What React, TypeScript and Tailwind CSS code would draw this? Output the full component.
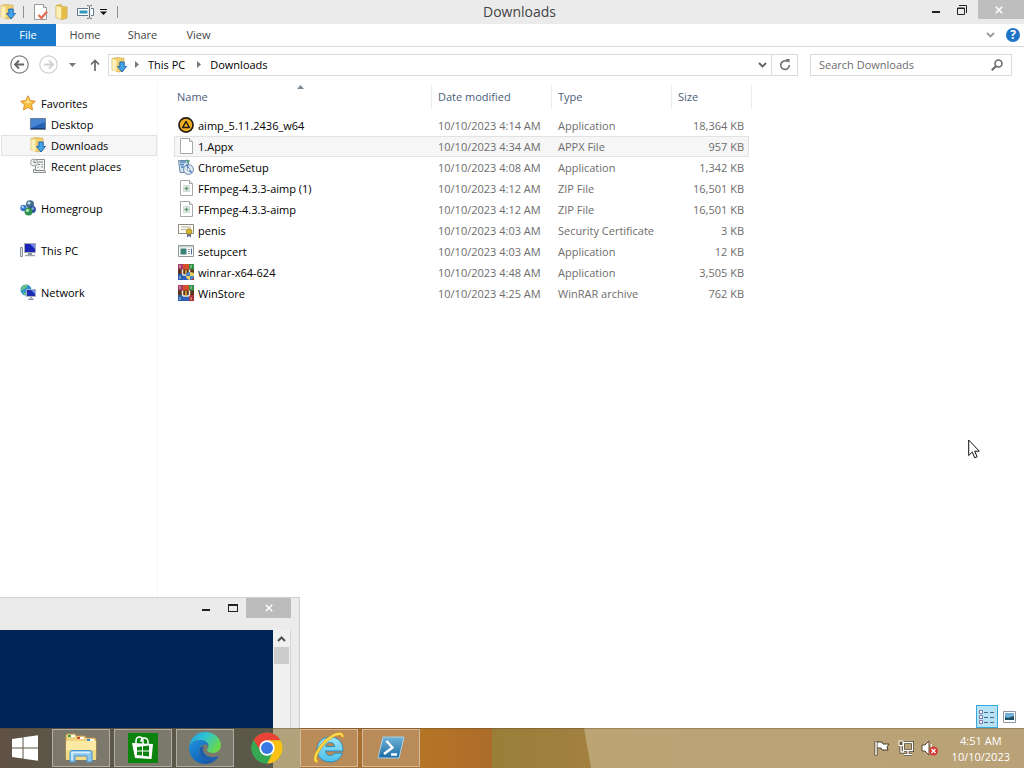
import { useState, type ReactNode } from 'react';

const FONT = "font-['Open_Sans','Noto_Sans',sans-serif]";

/* ---------- small icons ---------- */

function FolderDownIcon() {
  return (
    <svg width="16" height="16" viewBox="0 0 16 16" aria-hidden="true">
      <path d="M1 1.500L6 .5l7 .8v12.200l-5 1.500-7-2z" fill="#efcf6e" stroke="#cfae52" strokeWidth=".7" />
      <path d="M1.300 2l4.200 1v11.500l-4.200-1.200z" fill="#fdf0b8" />
      <path d="M8.800 5h4.400v4.500h2.300L11 15 6.500 9.500h2.300z" fill="#45a4ea" stroke="#1a62ae" strokeWidth=".9" />
    </svg>
  );
}

function PropertiesIcon() {
  return (
    <svg width="16" height="16" viewBox="0 0 16 16" aria-hidden="true">
      <path d="M1.500.5h9l3 3v12h-12z" fill="#fff" stroke="#9a9a9a" />
      <path d="M10.500.5v3h3" fill="#eee" stroke="#9a9a9a" />
      <path d="M5.500 11l3 3L14 7.500" fill="none" stroke="#e46a55" strokeWidth="2.400" />
    </svg>
  );
}

function FolderIcon() {
  return (
    <svg width="16" height="16" viewBox="0 0 16 16" aria-hidden="true">
      <path d="M2 1.500L7 .5l1 2 5 .5v11l-5 1.500-6-2z" fill="#ecc85c" stroke="#c9a33f" strokeWidth=".8" />
      <path d="M2.300 2l4.700 1.500V15l-4.700-1.500z" fill="#fdf0b5" />
      <path d="M8 5l4.500-1v9L8 14.500z" fill="#e5bb48" />
    </svg>
  );
}

function RenameIcon() {
  return (
    <svg width="18" height="14" viewBox="0 0 18 14" aria-hidden="true">
      <path d="M11 3.500H.5v7H11M14 3.500h2.500v7H14" fill="#fff" stroke="#62798a" />
      <path d="M2.500 5.500h8v3h-8z" fill="#3196bd" />
      <path d="M10 .5c1.500 0 2.500.3 2.500 1.500v10c0 1.200-1 1.500-2.500 1.500M15 .5c-1.500 0-2.500.3-2.500 1.500v10c0 1.200 1 1.500 2.500 1.500" fill="none" stroke="#66737e" />
    </svg>
  );
}

function StarIcon() {
  return (
    <svg width="16" height="16" viewBox="0 0 16 16" aria-hidden="true">
      <path d="M8 .8l2.200 4.800 5.200.6-3.900 3.500 1.100 5.300L8 12.400 3.400 15l1.100-5.300L.6 6.200l5.200-.6z" fill="#fdbe3d" stroke="#d8872a" strokeWidth=".9" />
      <path d="M8 3l1.300 3.300 3.200.5L8 8.500 4 7l2.700-.6z" fill="#ffe48a" />
    </svg>
  );
}

function DesktopIcon() {
  return (
    <svg width="16" height="16" viewBox="0 0 16 16" aria-hidden="true">
      <path d="M.5 2.500h15v11H.5z" fill="#2660b5" stroke="#6e8199" />
      <path d="M1 3h14v3L1 12z" fill="#4585d2" />
      <path d="M1 12h14v1H1z" fill="#1c3d73" />
    </svg>
  );
}

function RecentIcon() {
  return (
    <svg width="16" height="16" viewBox="0 0 16 16" aria-hidden="true">
      <path d="M5.500 1.500h9v10l1 3h-12v-3h2z" fill="#f5f5f5" stroke="#8a908d" />
      <path d="M8 4h5M8 6.500h2M11.500 6.500H13M7.500 9H9M11 9h2M5 12.500h9" stroke="#7c8784" />
      <circle cx="4" cy="4.500" r="3.500" fill="#eef0ef" stroke="#9a9f9d" />
      <path d="M4 2.500v2h2" fill="none" stroke="#6e7573" />
    </svg>
  );
}

function HomegroupIcon() {
  return (
    <svg width="16" height="16" viewBox="0 0 16 16" aria-hidden="true">
      <circle cx="3.500" cy="8" r="3.200" fill="#3d77d0" />
      <circle cx="2.800" cy="7" r="1.200" fill="#a5cdf5" />
      <circle cx="10" cy="4.200" r="4" fill="#41708f" />
      <circle cx="9" cy="3" r="1.600" fill="#c1dceb" />
      <circle cx="12.500" cy="9.500" r="3.400" fill="#2b4fa0" />
      <circle cx="8.500" cy="11.500" r="4" fill="#2f9152" />
      <circle cx="7.500" cy="10.500" r="1.700" fill="#a8e0b0" />
      <circle cx="12.800" cy="8.500" r="1.200" fill="#8eb2e8" />
    </svg>
  );
}

function ComputerIcon() {
  return (
    <svg width="16" height="16" viewBox="0 0 16 16" aria-hidden="true">
      <path d="M.5 5.500h2v9h-2z" fill="#e4e6e8" stroke="#8b9096" />
      <path d="M4.500 1.500h11v9h-11z" fill="#1a25b8" stroke="#a5aab5" />
      <path d="M10 2h5v5z" fill="#7186e8" />
      <path d="M8 11h4v2H8z" fill="#8d939c" />
      <path d="M5 13.500h10" stroke="#9da2a8" strokeWidth="1.500" />
    </svg>
  );
}

function NetworkIcon() {
  return (
    <svg width="16" height="16" viewBox="0 0 16 16" aria-hidden="true">
      <circle cx="6" cy="6" r="5.500" fill="#2f8fd0" />
      <path d="M2 3c2-2 4-2.500 6-2L6 4 3 6 1 7zM3 8l3 1v2.500C4 11 3 10 3 8z" fill="#64c47c" />
      <path d="M6.500 5.500h9v7h-9z" fill="#1c2cb0" stroke="#a9b3c6" />
      <path d="M11 6h4v4z" fill="#6d8ae8" />
      <path d="M10 13h2v1.500H8.500V16h5v-1.500H12" fill="#888f99" />
    </svg>
  );
}

function AimpIcon() {
  return (
    <svg width="16" height="16" viewBox="0 0 16 16" aria-hidden="true">
      <circle cx="8" cy="8" r="7.900" fill="#221b12" />
      <circle cx="8" cy="8" r="6.200" fill="#efae22" />
      <path d="M8 4.500l3.300 6H4.700z" fill="none" stroke="#221b12" strokeWidth="1.500" strokeLinejoin="round" />
    </svg>
  );
}

function BlankFileIcon({ zip = false }: { zip?: boolean }) {
  return (
    <svg width="16" height="16" viewBox="0 0 16 16" aria-hidden="true">
      <path d="M2.500.5h9l3 3v12h-12z" fill="#fff" stroke="#a8a8a8" />
      <path d="M11.500.5v3h3" fill="#eee" stroke="#a8a8a8" />
      {zip && (
        <>
          <path d="M5.500 5.500h6v6h-6z" fill="#eaf1ec" stroke="#b9c6bd" strokeWidth=".6" />
          <path d="M8.500 6.500v4M6.500 8.500h4" stroke="#5f9a72" strokeWidth="1.300" />
        </>
      )}
    </svg>
  );
}

function SetupIcon() {
  return (
    <svg width="16" height="16" viewBox="0 0 16 16" aria-hidden="true">
      <path d="M.5 1.500h10v12H2z" fill="#cfe0f2" stroke="#7089a5" />
      <path d="M2 3h6M2 5.500h4M3 8h3" stroke="#4d84bd" strokeWidth="1.300" />
      <path d="M8 .5l4 1-2 4z" fill="#54a07a" />
      <circle cx="10.500" cy="10.500" r="4.900" fill="#e3edf8" stroke="#6584a8" />
      <path d="M10.500 10.500L9 5.500M10.500 10.500l3 3" stroke="#4c77c5" strokeWidth="1.600" />
      <circle cx="10.500" cy="10.500" r="1.500" fill="#fff" stroke="#68819e" strokeWidth=".7" />
    </svg>
  );
}

function CertificateIcon() {
  return (
    <svg width="16" height="16" viewBox="0 0 16 16" aria-hidden="true">
      <path d="M.5 2.500h15v9H.5z" fill="#fffdf4" stroke="#8c8b7d" />
      <path d="M3 5h10M3 7.500h5" stroke="#b1ada0" />
      <path d="M9 11h4v4.500L11 14l-2 1.500z" fill="#5d6d9f" />
      <circle cx="11" cy="9.500" r="2.800" fill="#d3b62b" stroke="#957b17" strokeWidth=".7" />
    </svg>
  );
}

function AppWindowIcon() {
  return (
    <svg width="16" height="16" viewBox="0 0 16 16" aria-hidden="true">
      <path d="M.5 2.500h15v11H.5z" fill="#fff" stroke="#8f9a98" />
      <path d="M1 3h14v1.500H1z" fill="#c7d2d1" />
      <path d="M2.500 5.500h6v6h-6z" fill="#3d8279" />
      <path d="M10 6.500h2M10 8.500h2M10 10.500h2" stroke="#8b9694" />
      <path d="M13.500 5.500v6" stroke="#5b6da0" />
    </svg>
  );
}

function WinRarIcon({ shield = false }: { shield?: boolean }) {
  return (
    <svg width="16" height="16" viewBox="0 0 16 16" aria-hidden="true">
      <path d="M0 0h5v16H0z" fill="#a23a6a" />
      <path d="M5 0h6v16H5z" fill="#d4502b" />
      <path d="M11 0h5v16h-5z" fill="#2f9145" />
      <path d="M0 10h5v6H0z" fill="#275fb0" />
      <path d="M11 10h5v6h-5z" fill="#a93239" />
      <path d="M5 10h6v6H5z" fill="#2f5fc0" />
      <path d="M0 5.500h16v4.500H0z" fill="#5c3520" />
      <path d="M4.500 5.500v4q0 1.500 1.500 1.500h4q1.500 0 1.500-1.500v-4" fill="none" stroke="#f3ead2" strokeWidth="1.500" />
      <path d="M8 6v5" stroke="#e8b83b" strokeWidth="1.500" />
      <path d="M2 1v3M13 1v3M2 12v3M13 12v3" stroke="#f0e2c2" strokeWidth=".8" />
      {shield && (
        <>
          <path d="M8 9l4-1 4 1v3q0 3-4 4-4-1-4-4z" fill="#4a86cf" />
          <path d="M12 8l4 1v3h-4zM8 12h4v4q-4-1-4-4z" fill="#e9cf5a" />
        </>
      )}
    </svg>
  );
}

function CloseGlyph() {
  return (
    <svg width="8" height="8" viewBox="0 0 8 8" aria-hidden="true">
      <path d="M.7.7l6.600 6.600M7.300.7L.7 7.300" stroke="#fff" strokeWidth="1.500" />
    </svg>
  );
}

function Crumb() {
  return (
    <svg width="4" height="7" viewBox="0 0 4 7" aria-hidden="true">
      <path d="M0 0l4 3.500L0 7z" fill="#777" />
    </svg>
  );
}

/* ---------- taskbar icons ---------- */

function StartLogo() {
  return (
    <svg width="28" height="28" viewBox="0 0 28 28" aria-hidden="true">
      <path d="M1 5l10.500-1.500v10H1zM12.500 3.300L27 1.200v12.300H12.500zM1 14.500h10.500v10L1 23zM12.500 14.500H27v12.300l-14.500-2.100z" fill="#fff" />
    </svg>
  );
}

function ExplorerLogo() {
  return (
    <svg width="34" height="32" viewBox="0 0 34 32" aria-hidden="true">
      <path d="M2 3.500l1-1.500h8l1 2h9l1 2h9l1 2v18H2z" fill="#efd27e" stroke="#c7a04b" strokeWidth=".8" />
      <path d="M4 3h7v2H4zM13 5h7v2h-7zM23 7h7v2h-7z" fill="#fff" />
      <path d="M4 3h3v2H4z" fill="#3fa44c" />
      <path d="M13 5h3v2h-3z" fill="#d84a38" />
      <path d="M23 7h3v2h-3z" fill="#3c8cd8" />
      <path d="M2 9h30v19H2z" fill="#fbe9a4" />
      <path d="M2 18h30v10H2z" fill="#f3da85" />
      <path d="M6 30V20.500q0-2 2-2h18q2 0 2 2V30h-5v-6H11v6z" fill="#8dc8ef" stroke="#4a93cd" />
      <path d="M8 28v-7.500h18" fill="none" stroke="#d9f1ff" strokeWidth="1.500" />
    </svg>
  );
}

function StoreLogo() {
  return (
    <svg width="30" height="30" viewBox="0 0 30 30" aria-hidden="true">
      <path d="M0 0h30v30H0z" fill="#0b830e" />
      <path d="M8 11V8q0-4 3.500-4T15 8v3M13 9q0-4 3-4 4 0 4 4v2" fill="none" stroke="#fff" strokeWidth="1.500" />
      <path d="M4 10l21 1-1.500 15-16.500-1z" fill="#fff" />
      <path d="M9 14l5-.5v4H9zM15 13.300l6-.8v5h-6zM9 18.500h5v4L9 22zM15 18.500h6v5l-6-.8z" fill="#0b830e" />
    </svg>
  );
}

function EdgeLogo() {
  return (
    <svg width="32" height="32" viewBox="0 0 32 32" aria-hidden="true">
      <defs>
        <linearGradient id="edgeTop" x1="0" y1="0" x2="1" y2=".5">
          <stop offset="0" stopColor="#1e9be0" />
          <stop offset=".5" stopColor="#2fc3d3" />
          <stop offset="1" stopColor="#67d84c" />
        </linearGradient>
        <linearGradient id="edgeLow" x1="0" y1="0" x2="1" y2="1">
          <stop offset="0" stopColor="#1d93de" />
          <stop offset="1" stopColor="#0f4da5" />
        </linearGradient>
      </defs>
      <path d="M0 15C1 6 8 0 16 0c9 0 16 6 16 13 0 5-4 8-8 8-4 0-6-1.500-6-3 0-1 1.500-1.500 1.500-4C19.500 11 16 8 11 8 5 8 1 11 0 15z" fill="url(#edgeTop)" />
      <path d="M0 15c1-4 5-7 11-7 5 0 8.500 3 8.500 6-2-2-6-2-8 1-3 5 0 12 7 14 4 1 8-1 10-3-3 4-8 6-12.500 6C7 32 0 25 0 15z" fill="url(#edgeLow)" />
      <path d="M11.500 15c-3 5 0 12 7 14 4 1 8-1 10-3 1-1 1-2-.5-1.500-6 2-13-.5-14-6-.3-2 .3-3.500 1.500-4.500-2 0-3 .7-4 2z" fill="#1a5fae" />
    </svg>
  );
}

function ChromeLogo() {
  return (
    <svg width="32" height="32" viewBox="0 0 32 32" aria-hidden="true">
      <circle cx="16" cy="16" r="15.500" fill="#34a853" />
      <path d="M2.600 8.200A15.500 15.500 0 0129.400 8.200L16 9z" fill="#ea4335" />
      <path d="M29.400 8.200A15.500 15.500 0 0116 31.500l6-11.700L16 8.200z" fill="#fbc116" />
      <path d="M2.600 8.200L10 19.800 16 16V8.200z" fill="#ea4335" />
      <path d="M2.600 8.200L10 20l6 3 6-3.200-6 11.700A15.500 15.500 0 012.600 8.200z" fill="#34a853" />
      <circle cx="16" cy="16" r="7.700" fill="#fff" />
      <circle cx="16" cy="16" r="6" fill="#3b78e7" />
    </svg>
  );
}

function IeLogo() {
  return (
    <svg width="34" height="34" viewBox="0 0 34 34" aria-hidden="true">
      <defs>
        <linearGradient id="ieFill" x1="0" y1="0" x2="0" y2="1">
          <stop offset="0" stopColor="#9be6fb" />
          <stop offset="1" stopColor="#4dbfe9" />
        </linearGradient>
      </defs>
      <path
        d="M31 20H13.500c.3 3 2 4.500 4.700 4.500 1.800 0 3.200-.8 4-2.300h8.200C28.800 27.500 24 31 18 31 10.500 31 5 25.500 5 18.500S10.500 6 18 6c8 0 13.300 5.500 13 14zM13.700 15.500h9c-.3-2.500-2-4-4.400-4s-4.200 1.500-4.600 4z"
        fill="url(#ieFill)"
        stroke="#2389bd"
        strokeWidth=".9"
      />
      <path d="M4.500 30.500C1 27.500 6 17.500 13.500 10.500S29 .5 30.500 5" fill="none" stroke="#d3941c" strokeWidth="3.400" strokeLinecap="round" />
      <path d="M4.500 30.500C1 27.500 6 17.500 13.500 10.500S29 .5 30.500 5" fill="none" stroke="#fbdc4e" strokeWidth="2.300" strokeLinecap="round" />
    </svg>
  );
}

function PowerShellLogo() {
  return (
    <svg width="28" height="24" viewBox="0 0 28 24" aria-hidden="true">
      <defs>
        <linearGradient id="psFill" x1="0" y1="0" x2="0" y2="1">
          <stop offset="0" stopColor="#6fb4d8" />
          <stop offset="1" stopColor="#1c6aa6" />
        </linearGradient>
      </defs>
      <path d="M6 1h21l-5 21H1z" fill="url(#psFill)" stroke="#a6d0e5" />
      <path d="M9.500 5l6 6.500-8.500 6.500M14 18.500h6" fill="none" stroke="#fff" strokeWidth="2.400" />
    </svg>
  );
}

/* Desktop wallpaper showing through the translucent bar. */
function TaskbarBackdrop() {
  return (
    <svg className="absolute inset-0 h-full w-full" viewBox="0 0 1024 40" preserveAspectRatio="none" aria-hidden="true">
      <defs>
        <linearGradient id="barLeft">
          <stop offset="0" stopColor="#5f5044" />
          <stop offset=".25" stopColor="#5c5748" />
          <stop offset="1" stopColor="#5a5848" />
        </linearGradient>
        <linearGradient id="barOrange">
          <stop offset="0" stopColor="#b57526" />
          <stop offset="1" stopColor="#ac6c2a" />
        </linearGradient>
        <linearGradient id="barOlive">
          <stop offset="0" stopColor="#997e38" />
          <stop offset="1" stopColor="#a38040" />
        </linearGradient>
        <linearGradient id="barSand">
          <stop offset="0" stopColor="#bfa671" />
          <stop offset="1" stopColor="#b9a277" />
        </linearGradient>
      </defs>
      <path d="M0 0h1024v40H0z" fill="url(#barSand)" />
      <path d="M0 0h273v40H0z" fill="url(#barLeft)" />
      <path d="M273 0h27v40h-27z" fill="#b2a27c" />
      <path d="M300 0h120v40H300z" fill="#a76f30" />
      <path d="M420 0h73v40h-73z" fill="url(#barOrange)" />
      <path d="M492 0h92l7 40h-99z" fill="url(#barOlive)" />
      <path d="M0 .5h1024" stroke="#4a3c20" strokeOpacity=".3" />
    </svg>
  );
}

/* ---------- data ---------- */

interface FileEntry {
  name: string;
  modified: string;
  type: string;
  size: string;
  icon: ReactNode;
}

const FILES: FileEntry[] = [
  { name: 'aimp_5.11.2436_w64', modified: '10/10/2023 4:14 AM', type: 'Application', size: '18,364 KB', icon: <AimpIcon /> },
  { name: '1.Appx', modified: '10/10/2023 4:34 AM', type: 'APPX File', size: '957 KB', icon: <BlankFileIcon /> },
  { name: 'ChromeSetup', modified: '10/10/2023 4:08 AM', type: 'Application', size: '1,342 KB', icon: <SetupIcon /> },
  { name: 'FFmpeg-4.3.3-aimp (1)', modified: '10/10/2023 4:12 AM', type: 'ZIP File', size: '16,501 KB', icon: <BlankFileIcon zip /> },
  { name: 'FFmpeg-4.3.3-aimp', modified: '10/10/2023 4:12 AM', type: 'ZIP File', size: '16,501 KB', icon: <BlankFileIcon zip /> },
  { name: 'penis', modified: '10/10/2023 4:03 AM', type: 'Security Certificate', size: '3 KB', icon: <CertificateIcon /> },
  { name: 'setupcert', modified: '10/10/2023 4:03 AM', type: 'Application', size: '12 KB', icon: <AppWindowIcon /> },
  { name: 'winrar-x64-624', modified: '10/10/2023 4:48 AM', type: 'Application', size: '3,505 KB', icon: <WinRarIcon shield /> },
  { name: 'WinStore', modified: '10/10/2023 4:25 AM', type: 'WinRAR archive', size: '762 KB', icon: <WinRarIcon /> },
];

const TASKS: { label: string; icon: ReactNode; open: boolean }[] = [
  { label: 'File Explorer', icon: <ExplorerLogo />, open: true },
  { label: 'Store', icon: <StoreLogo />, open: true },
  { label: 'Microsoft Edge', icon: <EdgeLogo />, open: true },
  { label: 'Google Chrome', icon: <ChromeLogo />, open: false },
  { label: 'Internet Explorer', icon: <IeLogo />, open: true },
  { label: 'Windows PowerShell', icon: <PowerShellLogo />, open: true },
];

/* ---------- explorer window ---------- */

function TitleBar() {
  return (
    <header className="relative flex h-6 items-center justify-between bg-[#ebebeb]">
      <div className="flex items-center">
        <FolderDownIcon />
        <span className="ml-[7px] h-3 w-px bg-[#8f8f8f]" />
        <button aria-label="Properties" className="ml-[9px]"><PropertiesIcon /></button>
        <button aria-label="New folder" className="ml-[5px]"><FolderIcon /></button>
        <button aria-label="Rename" className="ml-[7px]"><RenameIcon /></button>
        <button aria-label="Customize Quick Access Toolbar" className="ml-[5px]">
          <svg width="7" height="6" viewBox="0 0 7 6" aria-hidden="true">
            <path d="M0 0h7v1H0zM0 2.500h7L3.500 6z" fill="#111" />
          </svg>
        </button>
        <span className="ml-[10px] h-3 w-px bg-[#8f8f8f]" />
      </div>
      <h1 className="pointer-events-none absolute inset-x-0 mr-[-15px] text-center text-[14px] leading-6 text-[#444]">Downloads</h1>
      <div className="flex h-full items-start">
        <button aria-label="Minimize" className="flex h-5 w-[26px] items-center justify-center pt-1">
          <span className="h-[2px] w-2 bg-[#222]" />
        </button>
        <button aria-label="Restore" className="flex h-5 w-[26px] items-center justify-center">
          <svg width="10" height="10" viewBox="0 0 10 10" aria-hidden="true">
            <path d="M2 .5h7.500V8" fill="none" stroke="#222" />
            <path d="M.5 3h7v6.500h-7zM.5 3.500h7" fill="none" stroke="#222" />
          </svg>
        </button>
        <button aria-label="Close" className="ml-[3px] flex h-[19px] w-[46px] items-center justify-center bg-[#bebebe] pr-1">
          <CloseGlyph />
        </button>
      </div>
    </header>
  );
}

function RibbonTabs() {
  return (
    <nav className="flex h-[23px] items-stretch border-b border-[#dadbdc] text-[11px] text-[#444]">
      <button className="h-[22px] w-14 bg-[#1979ca] text-white">File</button>
      <button className="w-[58px] pt-px">Home</button>
      <button className="w-[57px] pt-px">Share</button>
      <button className="w-[55px] pt-px">View</button>
      <div className="ml-auto flex items-center gap-[11px] pr-1">
        <button aria-label="Minimize the Ribbon">
          <svg width="9" height="6" viewBox="0 0 9 6" aria-hidden="true">
            <path d="M1 1l3.500 3.500L8 1" fill="none" stroke="#9a9a9a" strokeWidth="1.800" />
          </svg>
        </button>
        <button aria-label="Help" className="flex size-[14px] items-center justify-center rounded-full bg-[#1e74c8] text-[12px] leading-none font-bold text-white">
          ?
        </button>
      </div>
    </nav>
  );
}

function AddressBar() {
  return (
    <div className="flex h-[35px] items-center pr-3 pl-[10px] text-[11px]">
      <button aria-label="Back">
        <svg width="19" height="19" viewBox="0 0 19 19" aria-hidden="true">
          <circle cx="9.500" cy="9.500" r="8.700" fill="#fff" stroke="#7d7d7d" strokeWidth="1.200" />
          <path d="M14 9.500H5.500M9 5.500l-4 4 4 4" fill="none" stroke="#666" strokeWidth="1.800" />
        </svg>
      </button>
      <button aria-label="Forward" className="ml-[10px]">
        <svg width="19" height="19" viewBox="0 0 19 19" aria-hidden="true">
          <circle cx="9.500" cy="9.500" r="8.700" fill="#fff" stroke="#cfcfcf" strokeWidth="1.200" />
          <path d="M5 9.500h8.500M10 5.500l4 4-4 4" fill="none" stroke="#cfcfcf" strokeWidth="1.800" />
        </svg>
      </button>
      <button aria-label="Recent locations" className="ml-[11px]">
        <svg width="7" height="4" viewBox="0 0 7 4" aria-hidden="true">
          <path d="M0 0h7L3.500 4z" fill="#777" />
        </svg>
      </button>
      <button aria-label="Up" className="ml-[14px]">
        <svg width="10" height="12" viewBox="0 0 10 12" aria-hidden="true">
          <path d="M5 12V1.500M1 5.500l4-4 4 4" fill="none" stroke="#6a6a6a" strokeWidth="1.700" />
        </svg>
      </button>
      <div className="ml-2 flex h-[22px] flex-1 items-center border border-[#dcdcdc] pl-[2px] text-black">
        <FolderDownIcon />
        <span className="ml-2"><Crumb /></span>
        <button className="ml-[9px] pt-px leading-5">This PC</button>
        <span className="ml-3"><Crumb /></span>
        <button className="ml-[9px] pt-px leading-5">Downloads</button>
        <button aria-label="Previous locations" className="ml-auto pr-1">
          <svg width="9" height="6" viewBox="0 0 9 6" aria-hidden="true">
            <path d="M1 1l3.500 3.500L8 1" fill="none" stroke="#606060" strokeWidth="1.800" />
          </svg>
        </button>
        <button aria-label="Refresh" className="flex h-full w-[26px] items-center justify-center border-l border-[#dcdcdc]">
          <svg width="12" height="12" viewBox="0 0 12 12" aria-hidden="true">
            <path d="M8.500 2.600A4.300 4.300 0 1010.300 6" fill="none" stroke="#6a6a6a" strokeWidth="1.500" />
            <path d="M6.500 0h4v4z" fill="#6a6a6a" />
          </svg>
        </button>
      </div>
      <label className="ml-3 flex h-[22px] w-[202px] items-center border border-[#dcdcdc] px-2">
        <input
          type="text"
          aria-label="Search Downloads"
          placeholder="Search Downloads"
          className="min-w-0 flex-1 pt-px leading-5 outline-none placeholder:text-[#6d6d6d]"
        />
        <svg width="12" height="12" viewBox="0 0 12 12" aria-hidden="true">
          <circle cx="7.500" cy="4.500" r="3.500" fill="none" stroke="#6a6a6a" strokeWidth="1.600" />
          <path d="M5 7L.8 11.200" stroke="#6a6a6a" strokeWidth="2" />
        </svg>
      </label>
    </div>
  );
}

interface NavItemProps {
  icon: ReactNode;
  label: string;
  nested?: boolean;
  active?: boolean;
}

function NavItem({ icon, label, nested = false, active = false }: NavItemProps) {
  return (
    <a
      href="#"
      className={`flex h-[21px] items-start gap-[5px] border pt-px leading-[18px] ${nested ? 'pl-7' : 'pl-[18px]'} ${
        active ? 'border-[#e2e2e2] bg-[#f6f6f6]' : 'border-transparent'
      }`}
    >
      {icon}
      {label}
    </a>
  );
}

function Sidebar() {
  return (
    <nav className="w-[158px] shrink-0 border-r border-[#f6f7f8] pt-[11px] pl-px text-[11px] text-black">
      <div className="mb-[21px]">
        <NavItem icon={<StarIcon />} label="Favorites" />
        <NavItem icon={<DesktopIcon />} label="Desktop" nested />
        <NavItem icon={<FolderDownIcon />} label="Downloads" nested active />
        <NavItem icon={<RecentIcon />} label="Recent places" nested />
      </div>
      <div className="flex flex-col gap-[21px]">
        <NavItem icon={<HomegroupIcon />} label="Homegroup" />
        <NavItem icon={<ComputerIcon />} label="This PC" />
        <NavItem icon={<NetworkIcon />} label="Network" />
      </div>
    </nav>
  );
}

function FileTable() {
  const [selected, setSelected] = useState(1);
  const headCell = 'flex h-6 items-center border-r border-[#eceef0]';

  return (
    <table className="w-[578px] table-fixed border-separate border-spacing-0 text-left text-[11px]">
      <colgroup>
        <col className="w-[258px]" />
        <col className="w-[120px]" />
        <col className="w-[120px]" />
        <col className="w-[77px]" />
        <col className="w-[3px]" />
      </colgroup>
      <thead className="text-[#4c607a]">
        <tr>
          <th className="relative p-0 pb-[6px] font-normal">
            <div className={`${headCell} pl-[3px]`}>Name</div>
            <svg className="absolute top-0 left-[123px]" width="7" height="4" viewBox="0 0 7 4" aria-hidden="true">
              <path d="M3.500 0L7 4H0z" fill="#7f8b97" />
            </svg>
          </th>
          <th className="p-0 pb-[6px] font-normal">
            <div className={`${headCell} pl-[6px]`}>Date modified</div>
          </th>
          <th className="p-0 pb-[6px] font-normal">
            <div className={`${headCell} pl-[6px]`}>Type</div>
          </th>
          <th colSpan={2} className="p-0 pb-[6px] font-normal">
            <div className={`${headCell} pl-[6px]`}>Size</div>
          </th>
        </tr>
      </thead>
      <tbody className="leading-[18px] text-[#6d6d6d]">
        {FILES.map((file, i) => {
          const cell =
            i === selected
              ? 'h-[21px] border-y border-[#e2e2e2] bg-[#f6f6f6] pt-px pb-0'
              : 'h-[21px] border-y border-transparent pt-px pb-0';
          return (
            <tr key={file.name} onClick={() => setSelected(i)}>
              <td className={`${cell} border-l pr-0 pl-[3px] text-black`}>
                <div className="flex items-start gap-1">
                  {file.icon}
                  {file.name}
                </div>
              </td>
              <td className={`${cell} pr-0 pl-[6px] whitespace-nowrap`}>{file.modified}</td>
              <td className={`${cell} pr-0 pl-[6px] whitespace-nowrap`}>{file.type}</td>
              <td className={`${cell} border-r pr-1 pl-0 text-right whitespace-nowrap`}>{file.size}</td>
            </tr>
          );
        })}
      </tbody>
    </table>
  );
}

function ViewSwitcher() {
  return (
    <div className="flex items-center justify-end gap-[5px] pr-2">
      <button aria-label="Details" className="flex h-[23px] w-[22px] items-center justify-center border border-[#3aa7dc] bg-[#b5e2f5]">
        <svg width="16" height="14" viewBox="0 0 16 14" aria-hidden="true">
          <path d="M.5.500h3v3h-3zM.5 5.500h3v3h-3zM.5 10.500h3v3h-3z" fill="#fff" stroke="#7a76a8" />
          <path d="M5 2.500h4M11 2.500h4M5 7.500h4M11 7.500h4M5 12.500h4M11 12.500h4" stroke="#4d6680" />
        </svg>
      </button>
      <button aria-label="Large icons">
        <svg width="13" height="12" viewBox="0 0 13 12" aria-hidden="true">
          <path d="M.5.500h12v11H.5z" fill="#fff" stroke="#8b98a3" />
          <path d="M2 2h9v7H2z" fill="#6fb1d8" />
          <path d="M2 9V6l3 1 6-2v4z" fill="#1f4f66" />
        </svg>
      </button>
    </div>
  );
}

/* ---------- console window over the explorer ---------- */

function ConsoleWindow() {
  return (
    <section className="absolute bottom-0 left-0 flex h-[131px] w-[300px] flex-col border-t border-r border-[#cfcfcf] bg-[#ebebeb]">
      <div className="flex h-8 items-start justify-end pr-2">
        <button aria-label="Minimize console" className="flex h-5 w-[26px] items-center justify-center pt-1">
          <span className="h-[2px] w-2 bg-[#222]" />
        </button>
        <button aria-label="Maximize console" className="flex h-5 w-[27px] items-center justify-center">
          <span className="h-2 w-[10px] border border-t-2 border-[#222]" />
        </button>
        <button aria-label="Close console" className="flex h-5 w-[45px] items-center justify-center bg-[#bcbcbc]">
          <CloseGlyph />
        </button>
      </div>
      <div className="flex flex-1 pr-2">
        <div className="flex-1 bg-[#012456]" />
        <div className="flex w-[18px] flex-col items-center border-r border-[#d5d5d5] bg-[#f0f0f0]">
          <button aria-label="Scroll up" className="flex h-[17px] items-center">
            <svg width="9" height="6" viewBox="0 0 9 6" aria-hidden="true">
              <path d="M1 5l3.500-3.500L8 5" fill="none" stroke="#505050" strokeWidth="2" />
            </svg>
          </button>
          <div className="h-[17px] w-[15px] bg-[#cdcdcd]" />
        </div>
      </div>
    </section>
  );
}

/* ---------- taskbar ---------- */

function Taskbar() {
  return (
    <footer className="relative h-10 shrink-0">
      <TaskbarBackdrop />
      <div className="relative flex h-full items-center">
        <button aria-label="Start" className="flex h-full w-[52px] items-center justify-center pr-[2px]">
          <StartLogo />
        </button>
        <div className="flex h-full items-center gap-1">
          {TASKS.map((task) => (
            <button
              key={task.label}
              aria-label={task.label}
              className={`flex h-[38px] w-[58px] items-center justify-center border ${
                task.open ? 'border-white/40 bg-white/20' : 'border-transparent'
              }`}
            >
              {task.icon}
            </button>
          ))}
        </div>
        <div className="ml-auto flex items-center pr-[14px]">
          <svg width="16" height="16" viewBox="0 0 16 16" aria-hidden="true">
            <path d="M2 1v14.500" stroke="#4a3c28" strokeWidth="3" />
            <path d="M3 2h5l1 2h6l-2 3 1 3H8L7 8H3z" fill="#fff" stroke="#4a3c28" />
            <path d="M2 1.500V15" stroke="#fff" strokeWidth="1.500" />
          </svg>
          <svg className="ml-2" width="16" height="16" viewBox="0 0 16 16" aria-hidden="true">
            <path d="M5.500 2.500h9v8h-9zM10 11v3M6 14.500h8M3 6v6h3" fill="none" stroke="#4a3c28" strokeWidth="3" />
            <path d="M5.500 2.500h9v8h-9zM10 11v3M6 14.500h8M3 6v6h3" fill="none" stroke="#fff" strokeWidth="1.400" />
            <path d="M1 1h4v4.500H1z" fill="#6b5a3e" stroke="#fff" />
          </svg>
          <svg className="ml-[7px]" width="18" height="16" viewBox="0 0 18 16" aria-hidden="true">
            <path d="M1 5h3l4-4v14l-4-4H1z" fill="#fff" stroke="#5a4a32" />
            <path d="M10 4q2 4 0 8" fill="none" stroke="#fff" />
            <circle cx="12.500" cy="11" r="4.500" fill="#d23b35" />
            <path d="M10.500 9l4 4M14.500 9l-4 4" stroke="#fff" strokeWidth="1.400" />
          </svg>
          <div className="ml-[13px] pt-[2px] text-center text-[11px] leading-4 text-white">
            <p>4:51 AM</p>
            <p>10/10/2023</p>
          </div>
        </div>
      </div>
    </footer>
  );
}

export default function App() {
  return (
    <div className={`relative flex h-screen flex-col overflow-hidden bg-white ${FONT}`}>
      <div className="relative flex min-h-0 flex-1 flex-col">
        <TitleBar />
        <RibbonTabs />
        <AddressBar />
        <div className="flex min-h-0 flex-1">
          <Sidebar />
          <main className="flex flex-1 flex-col justify-between pt-[3px] pl-4">
            <FileTable />
            <ViewSwitcher />
          </main>
        </div>
        <ConsoleWindow />
      </div>
      <Taskbar />
      {/* mouse pointer */}
      <svg className="pointer-events-none absolute top-[439px] left-[968px]" width="12" height="20" viewBox="0 0 12 20" aria-hidden="true">
        <path d="M.7 1v15.500l3.600-3.400 2.400 5.700 2.400-1-2.400-5.600h4.600z" fill="#fff" stroke="#111" />
      </svg>
    </div>
  );
}
